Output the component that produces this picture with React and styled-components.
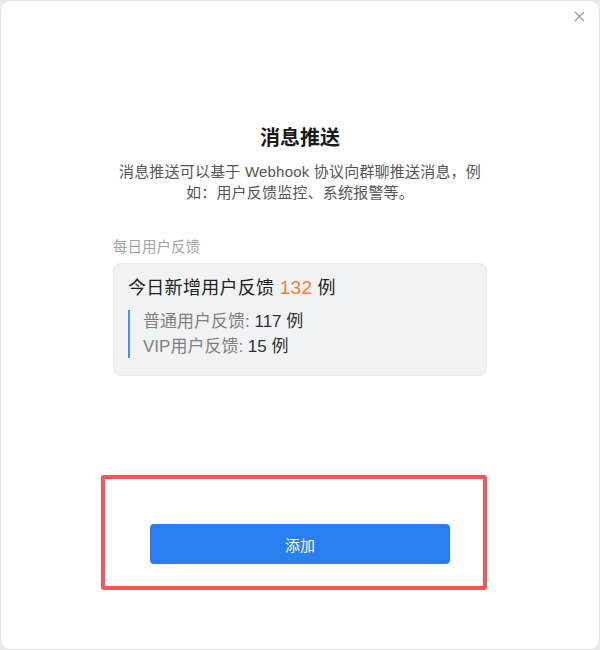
import React from "react";
import styled, { createGlobalStyle } from "styled-components";

const Global = createGlobalStyle`
  html, body { margin: 0; padding: 0; background: #e9e9e9; }
  body { font-family: "Liberation Sans", "Noto Sans CJK SC", sans-serif; }
  * { box-sizing: border-box; }
`;

const Dialog = styled.div`
  position: relative;
  width: 600px;
  height: 650px;
  background: #fff;
  border-radius: 10px;
  box-shadow: inset 0 0 0 1px #e4e4e4;
  display: flex;
  flex-direction: column;
  align-items: center;
`;

const Close = styled.button`
  position: absolute;
  top: 9px;
  right: 14px;
  width: 14px;
  height: 14px;
  padding: 0;
  border: none;
  background: none;
  display: flex;
  align-items: center;
  justify-content: center;
`;

const Content = styled.div`
  width: 374px;
  margin-top: 123px;
  display: flex;
  flex-direction: column;
  align-items: center;
`;

const Title = styled.h1`
  margin: 0;
  font-size: 20px;
  line-height: 30px;
  font-weight: 700;
  color: #1a1a1a;
`;

const Desc = styled.p`
  margin: 8px -6px 0;
  font-size: 15px;
  line-height: 21px;
  letter-spacing: 0.2px;
  color: #555;
  text-align: center;
`;

const Label = styled.div`
  align-self: stretch;
  margin-top: 34px;
  font-size: 14.5px;
  line-height: 20px;
  color: #a3a3a3;
`;

const Card = styled.div`
  align-self: stretch;
  margin-top: 6px;
  height: 113px;
  background: #f1f2f3;
  border: 1px solid #e9eaeb;
  border-radius: 8px;
  padding: 11px 14px 0;
`;

const CardTitle = styled.div`
  font-size: 18px;
  line-height: 26px;
  letter-spacing: 0.3px;
  color: #222;
`;

const Num = styled.span`
  color: #f47f2f;
  font-size: 19px;
`;

const Quote = styled.div`
  margin-top: 9px;
  border-left: 2px solid #4a8cf6;
  padding-left: 13px;
  display: flex;
  flex-direction: column;
  gap: 2px;
`;

const Line = styled.div`
  font-size: 17px;
  line-height: 23px;
  color: #808080;
`;

const Strong = styled.span`
  color: #333;
`;

const Highlight = styled.div`
  margin-top: 99px;
  margin-left: -12px;
  width: 386px;
  height: 115px;
  border: 4px solid #f65656;
  border-radius: 3px;
  display: flex;
  justify-content: flex-start;
  padding: 45px 0 0 45px;
`;

const Button = styled.button`
  width: 300px;
  height: 40px;
  border: none;
  border-radius: 4px;
  background: #2a7ff0;
  color: #fff;
  font-family: "Noto Sans CJK SC", sans-serif;
  font-size: 15px;
`;

export default function App() {
  return (
    <>
      <Global />
      <Dialog>
        <Close aria-label="关闭">
          <svg width="11" height="11" viewBox="0 0 11 11">
            <path d="M1 1L10 10M10 1L1 10" stroke="#9a9a9a" strokeWidth="1.2" />
          </svg>
        </Close>
        <Content>
          <Title>消息推送</Title>
          <Desc>
            消息推送可以基于 Webhook 协议向群聊推送消息，例如：用户反馈监控、系统报警等。
          </Desc>
          <Label>每日用户反馈</Label>
          <Card>
            <CardTitle>
              今日新增用户反馈 <Num>132</Num> 例
            </CardTitle>
            <Quote>
              <Line>
                普通用户反馈: <Strong>117 例</Strong>
              </Line>
              <Line>
                VIP用户反馈: <Strong>15 例</Strong>
              </Line>
            </Quote>
          </Card>
          <Highlight>
            <Button>添加</Button>
          </Highlight>
        </Content>
      </Dialog>
    </>
  );
}
